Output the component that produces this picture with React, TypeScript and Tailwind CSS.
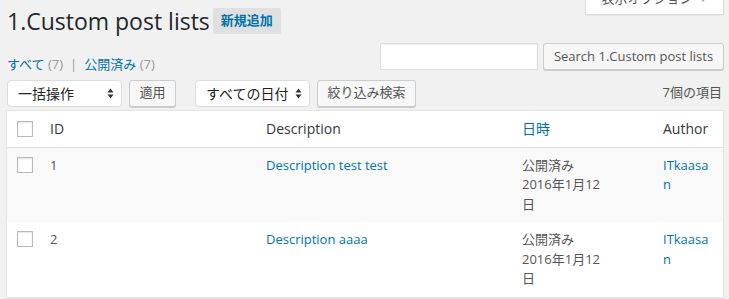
import React from "react";

const FONT = { fontFamily: '"Open Sans", "Noto Sans CJK JP", sans-serif' };

interface Row {
  id: string;
  description: string;
  status: string;
  date: string;
  author: string;
  striped: boolean;
}

const rows: Row[] = [
  { id: "1", description: "Description test test", status: "公開済み", date: "2016年1月12日", author: "ITkaasan", striped: true },
  { id: "2", description: "Description aaaa", status: "公開済み", date: "2016年1月12日", author: "ITkaasan", striped: false },
];

function Checkbox() {
  return (
    <span className="block w-[16px] h-[16px] border border-[#b4b9be] bg-white shadow-[inset_0_1px_2px_rgba(0,0,0,0.1)]" />
  );
}

function SelectBox({ label }: { label: string }) {
  return (
    <div className="flex items-center justify-between w-[115px] h-[27px] bg-white border border-[#ddd] rounded-[4px] pl-[10px] pr-[7px] text-[14px] text-[#222]">
      <span>{label}</span>
      <svg width="7" height="11" viewBox="0 0 7 11" className="text-[#333]">
        <path d="M3.5 0.5 L6.5 4.5 L0.5 4.5 Z" fill="currentColor" />
        <path d="M3.5 10.5 L6.5 6.5 L0.5 6.5 Z" fill="currentColor" />
      </svg>
    </div>
  );
}

function Button({ label, width }: { label: string; width: string }) {
  return (
    <button
      className={`${width} h-[27px] bg-[#f7f7f7] border border-[#ccc] rounded-[3px] shadow-[0_1px_0_#ccc] text-[13px] text-[#555]`}
    >
      {label}
    </button>
  );
}

export default function App() {
  return (
    <div className="bg-[#f1f1f1] w-[729px] h-[299px] overflow-hidden text-[13px] text-[#444]" style={FONT}>
      <div className="pl-[6px] pr-[5px]">
        {/* screen options tab, scrolled partly out of view */}
        <div className="flex justify-end h-[8px]">
          <div className="-mt-[17px] w-[139px] h-[32px] bg-white border border-t-0 border-[#ddd] shadow-[0_1px_1px_rgba(0,0,0,0.04)] flex items-center justify-center gap-[6px] text-[13px] text-[#555]">
            <span>表示オプション</span>
            <span className="text-[9px] text-[#aaa]">▼</span>
          </div>
        </div>

        {/* heading */}
        <div className="flex items-center gap-[3px] pl-[1px] h-[26px]">
          <h1 className="text-[23px] leading-[26px] text-[#23282d] font-normal">1.Custom post lists</h1>
          <span className="h-[26px] px-[8px] flex items-center bg-[#e0e0e0] rounded-[2px] text-[13px] font-semibold text-[#0073aa]">
            新規追加
          </span>
        </div>

        {/* status links + search */}
        <div className="flex justify-between mt-[9px]">
          <div className="pl-[1px] pt-[12px] text-[13px] text-[#666]">
            <span className="text-[#0073aa]">すべて</span> <span className="text-[#999]">(7)</span>
            <span className="text-[#999] mx-[7px]">|</span>
            <span className="text-[#0073aa]">公開済み</span> <span className="text-[#999]">(7)</span>
          </div>
          <div className="flex items-start gap-[5px]">
            <div className="w-[158px] h-[27px] bg-white border border-[#ddd] shadow-[inset_0_1px_2px_rgba(0,0,0,0.07)]" />
            <Button label="Search 1.Custom post lists" width="w-[181px]" />
          </div>
        </div>

        {/* tablenav */}
        <div className="flex items-center justify-between mt-[5px] pl-[1px] h-[27px]">
          <div className="flex items-center">
            <SelectBox label="一括操作" />
            <div className="ml-[7px]">
              <Button label="適用" width="w-[47px]" />
            </div>
            <div className="ml-[19px]">
              <SelectBox label="すべての日付" />
            </div>
            <div className="ml-[7px]">
              <Button label="絞り込み検索" width="w-[99px]" />
            </div>
          </div>
          <span className="text-[13px] text-[#555] pr-[2px]">7個の項目</span>
        </div>

        {/* table */}
        <div className="mt-[3px] bg-white border border-[#e5e5e5] shadow-[0_1px_1px_rgba(0,0,0,0.04)]">
          <div className="grid grid-cols-[33px_216px_256px_141px_70px] h-[37px] items-center border-b border-[#e1e1e1] text-[14px] text-[#32373c]">
            <div className="pl-[10px]">
              <Checkbox />
            </div>
            <div className="pl-[10px]">ID</div>
            <div className="pl-[10px]">Description</div>
            <div className="pl-[10px] text-[#0073aa]">日時</div>
            <div className="pl-[10px]">Author</div>
          </div>
          {rows.map((r) => (
            <div
              key={r.id}
              className={`grid grid-cols-[33px_216px_256px_141px_70px] items-start py-[8px] text-[13px] leading-[19.5px] ${r.striped ? "bg-[#f9f9f9]" : "bg-white"}`}
            >
              <div className="pl-[10px] pt-[1px]">
                <Checkbox />
              </div>
              <div className="pl-[10px] text-[#555]">{r.id}</div>
              <div className="pl-[10px] text-[#0073aa]">{r.description}</div>
              <div className="pl-[10px] text-[#555]">
                <div>{r.status}</div>
                <div className="w-[84px]">{r.date}</div>
              </div>
              <div className="pl-[10px]">
                <div className="w-[50px] break-words text-[#0073aa]">{r.author}</div>
              </div>
            </div>
          ))}
        </div>
      </div>
    </div>
  );
}
